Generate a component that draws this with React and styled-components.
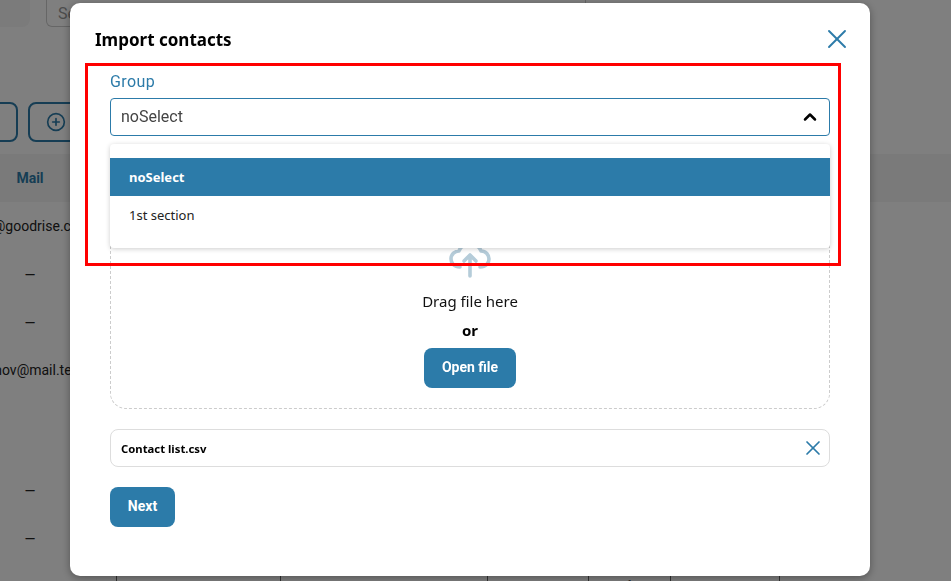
import React from 'react';
import styled, { createGlobalStyle } from 'styled-components';
import { ChevronUp, CirclePlus, X } from 'lucide-react';

const primary = '#2c7ba9';

const GlobalStyle = createGlobalStyle`
  html, body {
    margin: 0;
    height: 100%;
    overflow: hidden;
    background: #fff;
    font-family: "Noto Sans", sans-serif;
  }
  * { box-sizing: border-box; }
`;

/* page behind the dialog */
const Page = styled.div`
  width: 951px;
  height: 581px;
  overflow: hidden;
  font-family: Roboto, sans-serif;
`;

const TopBar = styled.div`
  display: flex;
  gap: 16px;
  height: 27px;
`;

const Filter = styled.div`
  width: 30px;
  background: #f6f6f6;
  border-radius: 0 0 8px 0;
`;

const Search = styled.div`
  display: flex;
  align-items: flex-end;
  width: 540px;
  padding: 0 0 0 11px;
  border: 1px solid #ccc;
  border-top: 0;
  border-radius: 0 0 6px 6px;
  color: #999;
  font-size: 16px;
  line-height: 24px;
`;

const Actions = styled.div`
  display: flex;
  gap: 10px;
  margin: 75px 0 12px -40px;
`;

const ActionButton = styled.div`
  display: flex;
  align-items: center;
  width: ${p => p.$width}px;
  height: 40px;
  padding-left: 16px;
  border: 2px solid ${primary};
  border-radius: 8px;
  color: ${primary};
`;

const Table = styled.div`
  margin-left: -57px;
  width: 1100px;
`;

const HeaderRow = styled.div`
  display: grid;
  grid-template-columns: 174px 1fr;
  align-items: center;
  height: 48px;
  background: #f5f5f5;
  color: ${primary};
  font-size: 14px;
  font-weight: 700;
  text-align: center;
`;

const Row = styled.div`
  display: grid;
  grid-template-columns: 174px 1fr;
  align-items: center;
  height: ${p => p.$height || 48}px;
  color: #222;
  font-size: 14px;
  text-align: center;
  white-space: nowrap;
`;

const MailCell = styled.div`
  width: 174px;
  display: flex;
  justify-content: center;
  padding-top: ${p => (p.$dash ? 2 : 0)}px;
`;

const CellRow = styled.div`
  display: grid;
  grid-template-columns: 174px 164px 207px 101px 82px 109px 1fr;
  height: 48px;
`;

const Cell = styled.div`
  border-right: 1px solid #666;
  padding-top: 16px;
  text-align: center;
  font-size: 14px;
  color: #222;
`;

/* dialog */
const Overlay = styled.div`
  position: fixed;
  inset: 0;
  display: flex;
  align-items: flex-start;
  padding: 3px 0 0 70px;
  background: rgba(0, 0, 0, 0.5);
`;

const Modal = styled.div`
  position: relative;
  width: 800px;
  padding-bottom: 49px;
  background: #fff;
  border-radius: 10px;
  box-shadow: 0 2px 8px rgba(0, 0, 0, 0.35);
`;

const ModalHeader = styled.div`
  display: flex;
  align-items: center;
  justify-content: space-between;
  height: 69px;
  padding: 3px 17px 0 25px;
`;

const Title = styled.h2`
  margin: 0;
  color: #000;
  font-size: 17px;
  font-weight: 700;
`;

const IconButton = styled.span`
  display: flex;
  color: ${primary};
`;

const Body = styled.div`
  position: relative;
  padding: 0 40px;
`;

const GroupLabel = styled.label`
  display: block;
  height: 20px;
  margin-bottom: 6px;
  color: ${primary};
  font-family: Roboto, sans-serif;
  font-size: 16px;
  line-height: 20px;
  letter-spacing: 0.4px;
`;

const SelectBox = styled.div`
  display: flex;
  align-items: center;
  justify-content: space-between;
  height: 38px;
  padding: 0 9px 0 10px;
  border: 1px solid ${primary};
  border-radius: 4px;
  color: #444;
  font-family: Roboto, sans-serif;
  font-size: 16px;
`;

const SelectValue = styled.span`
  padding-bottom: 2px;
`;

const Menu = styled.ul`
  position: absolute;
  top: 72px;
  left: 40px;
  right: 40px;
  z-index: 2;
  margin: 0;
  padding: 14px 0;
  list-style: none;
  background: #fff;
  border-radius: 4px;
  box-shadow: 0 1px 5px rgba(0, 0, 0, 0.2);
`;

const Option = styled.li`
  display: flex;
  align-items: center;
  height: 38px;
  padding-left: 19px;
  background: ${p => (p.$active ? primary : '#fff')};
  color: ${p => (p.$active ? '#fff' : '#222')};
  font-size: 13px;
  font-weight: ${p => (p.$active ? 700 : 400)};
`;

const DropZone = styled.div`
  display: flex;
  flex-direction: column;
  align-items: center;
  margin-top: 16px;
  padding: 81px 0 20px;
  border: 1px dashed #ccc;
  border-radius: 16px;
`;

const CloudIcon = styled.svg`
  display: block;
  width: 48px;
  height: 48px;
  margin-bottom: 8px;
  fill: none;
  stroke: #b5ccd9;
  stroke-width: 3.6;
  stroke-linecap: round;
  stroke-linejoin: round;
`;

const DragText = styled.div`
  color: #111;
  font-size: 15px;
  line-height: 22px;
`;

const OrText = styled.div`
  margin: 7px 0 7px;
  color: #000;
  font-size: 15px;
  font-weight: 700;
  line-height: 22px;
`;

const PrimaryButton = styled.button`
  width: ${p => p.$width}px;
  height: 40px;
  padding: 0 0 2px;
  border: 0;
  border-radius: 8px;
  background: ${primary};
  color: #fff;
  font-family: Roboto, sans-serif;
  font-size: 14px;
  font-weight: 700;
`;

const FileRow = styled.div`
  display: flex;
  align-items: center;
  justify-content: space-between;
  height: 38px;
  margin: 20px 0 20px;
  padding: 0 4px 0 10px;
  border: 1px solid #ddd;
  border-radius: 8px;
`;

const FileName = styled.span`
  color: #000;
  font-size: 11.3px;
  font-weight: 700;
`;

const Highlight = styled.div`
  position: absolute;
  left: 15px;
  top: 60px;
  z-index: 3;
  width: 756px;
  height: 203px;
  border: 3px solid #f00;
  pointer-events: none;
`;

export default function App() {
  return (
    <>
      <GlobalStyle />
      <Page>
        <TopBar>
          <Filter />
          <Search>Search by mail, phone or full name of the contact</Search>
        </TopBar>
        <Actions>
          <ActionButton $width={58} />
          <ActionButton $width={120}>
            <CirclePlus size={20} strokeWidth={2} />
          </ActionButton>
        </Actions>
        <Table>
          <HeaderRow><span>Mail</span></HeaderRow>
          <Row><MailCell>info@goodrise.com</MailCell></Row>
          <Row><MailCell $dash>—</MailCell></Row>
          <Row><MailCell $dash>—</MailCell></Row>
          <Row><MailCell>ivanov@mail.test</MailCell></Row>
          <Row $height={72} />
          <Row><MailCell $dash>—</MailCell></Row>
          <Row><MailCell $dash>—</MailCell></Row>
          <CellRow>
            <Cell />
            <Cell />
            <Cell />
            <Cell />
            <Cell>1</Cell>
            <Cell />
          </CellRow>
        </Table>
      </Page>
      <Overlay>
        <Modal>
          <ModalHeader>
            <Title>Import contacts</Title>
            <IconButton><X size={32} strokeWidth={1.4} /></IconButton>
          </ModalHeader>
          <Body>
            <GroupLabel>Group</GroupLabel>
            <SelectBox>
              <SelectValue>noSelect</SelectValue>
              <ChevronUp size={20} strokeWidth={3} color="#000" />
            </SelectBox>
            <Menu>
              <Option $active>noSelect</Option>
              <Option>1st section</Option>
            </Menu>
            <DropZone>
              <CloudIcon viewBox="0 0 48 48">
                <path d="M14 33C8 33 5 29 5 25C5 20 9 17 13 17C16 8 32 8 35 17C40 17 43 21 43 25C43 29 40 33 34 33" />
                <path d="M24 42V21M18 27L24 21L30 27" />
              </CloudIcon>
              <DragText>Drag file here</DragText>
              <OrText>or</OrText>
              <PrimaryButton $width={92}>Open file</PrimaryButton>
            </DropZone>
            <FileRow>
              <FileName>Contact list.csv</FileName>
              <IconButton><X size={24} strokeWidth={1.7} /></IconButton>
            </FileRow>
            <PrimaryButton $width={65}>Next</PrimaryButton>
          </Body>
          <Highlight />
        </Modal>
      </Overlay>
    </>
  );
}
